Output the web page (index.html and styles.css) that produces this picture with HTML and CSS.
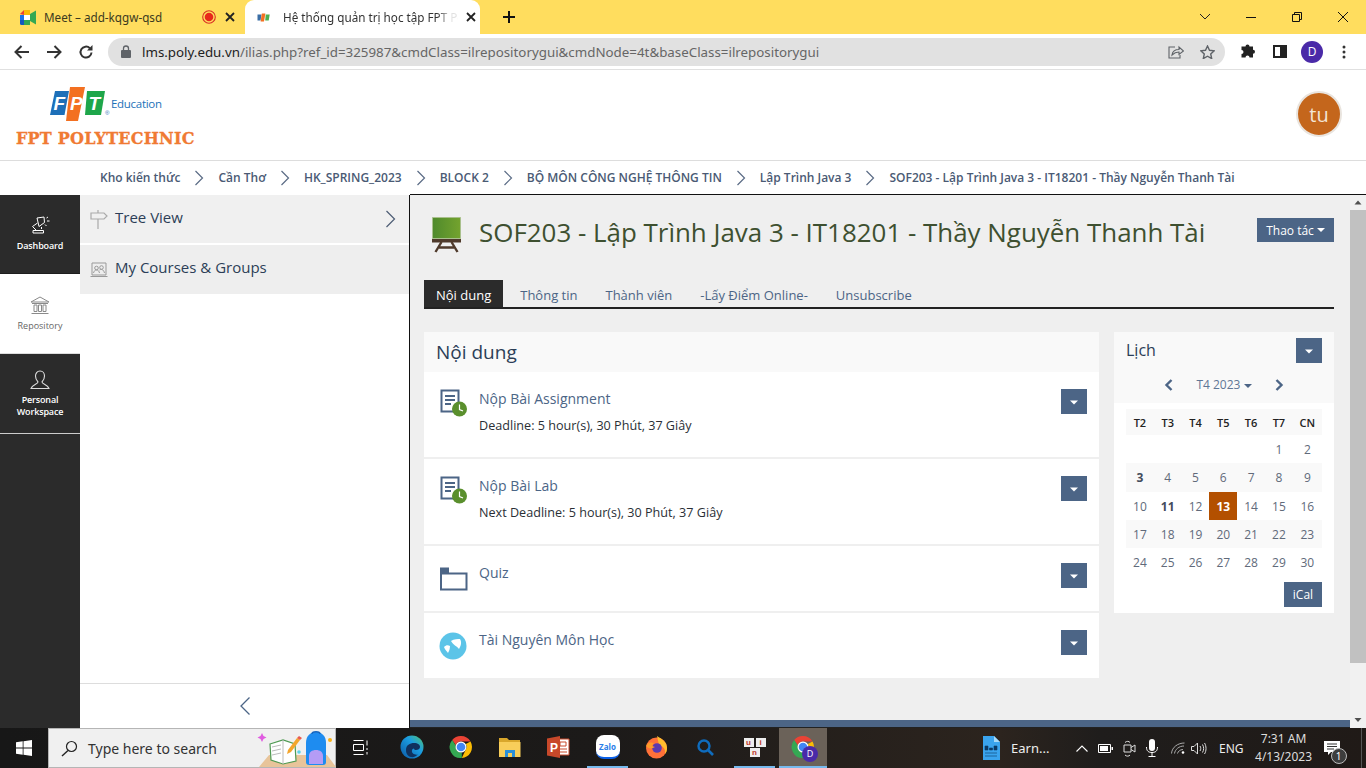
FILE: index.html
```html
<!DOCTYPE html>
<html lang="vi">
<head>
<meta charset="utf-8">
<title>Hệ thống quản trị học tập FPT Polytechnic</title>
<link rel="stylesheet" href="styles.css">
</head>
<body>
<svg class="defs" width="0" height="0" aria-hidden="true">
  <symbol id="chrome" viewBox="0 0 24 24">
    <path d="M12 1a11 11 0 0 1 9.500 5.500H12a5.500 5.500 0 0 0-5.200 3.700L3.200 5A11 11 0 0 1 12 1z" fill="#ea4335"/>
    <path d="M21.500 6.500A11 11 0 0 1 12.800 23l3.900-8.200A5.500 5.500 0 0 0 16.800 9L21.500 6.500z" fill="#fbbc04"/>
    <path d="M12.800 23A11 11 0 0 1 3.200 5l3.700 5.800a5.500 5.500 0 0 0 5.900 6.700z" fill="#34a853"/>
    <circle cx="12" cy="12" r="5.500" fill="#fff"/><circle cx="12" cy="12" r="4.300" fill="#4285f4"/>
  </symbol>
  <symbol id="caret" viewBox="0 0 26 26"><path d="M9 11.500h8l-4 4z" fill="#fff"/></symbol>
  <symbol id="crumb" viewBox="0 0 12 16"><path d="M2.500 1l7 7-7 7" fill="none" stroke="#5a6b85" stroke-width="1.200"/></symbol>
  <symbol id="doc" viewBox="0 0 28 28">
    <path d="M1.500 1.500h17v21h-17z" fill="#fff" stroke="#4c6586" stroke-width="2"/>
    <path d="M5 7h10M5 11h10M5 15h6" stroke="#4c6586" stroke-width="1.800"/>
    <circle cx="19.500" cy="20" r="7.500" fill="#5a8f2d"/>
    <path d="M19.500 15.500v5l3.500 1.500" fill="none" stroke="#fff" stroke-width="1.200"/>
  </symbol>
</svg>

<header class="tabstrip">
  <div class="tab">
    <svg class="fav" width="17" height="15" viewBox="0 0 17 15"><path d="M4 0h6v5H4z" fill="#fbbc04"/><path d="M0 4l4-4v5z" fill="#ea4335"/><path d="M0 5h4v5H0z" fill="#1a73e8"/><path d="M0 10h4v5H1.500A1.500 1.500 0 0 1 0 13.500z" fill="#1558c0"/><path d="M4 10h6v5H4z" fill="#34a853"/><path d="M10 4l6-3.500v14L10 11z" fill="#34a853"/><path d="M4 5h6v5H4z" fill="#fff"/></svg>
    <span class="tab-title">Meet – add-kqgw-qsd</span>
    <svg class="rec" width="14" height="14" viewBox="0 0 14 14"><circle cx="7" cy="7" r="6.300" fill="none" stroke="#d93025" stroke-width="1.100"/><circle cx="7" cy="7" r="4.300" fill="#e8281b"/></svg>
    <svg class="tab-x" width="10" height="10" viewBox="0 0 10 10"><path d="M1 1l8 8M9 1l-8 8" stroke="#222" stroke-width="1.800"/></svg>
  </div>
  <div class="tab tab-active">
    <svg class="fav-fpt" width="13" height="9" viewBox="0 0 13 9"><path d="M.5 1.500h4l-1 6h-3z" fill="#3a6ea5"/><path d="M4.800.5h3.600l-1.400 8H3.600z" fill="#f37021"/><path d="M8.700 1.500h4l-1 6h-3.500z" fill="#4caf50"/></svg>
    <span class="tab-title tab-fade">Hệ thống quản trị học tập FPT Po</span>
    <svg class="tab-x" width="10" height="10" viewBox="0 0 10 10"><path d="M1 1l8 8M9 1l-8 8" stroke="#222" stroke-width="1.800"/></svg>
  </div>
  <svg class="newtab" width="12" height="12" viewBox="0 0 12 12"><path d="M6 0v12M0 6h12" stroke="#111" stroke-width="2"/></svg>
  <div class="winctl">
    <svg width="46" height="12" viewBox="0 0 46 12"><path d="M18 3l5 5 5-5" fill="none" stroke="#222"/></svg>
    <svg width="46" height="12" viewBox="0 0 46 12"><path d="M18 6.500h10" stroke="#111"/></svg>
    <svg width="46" height="12" viewBox="0 0 46 12"><path d="M18.500 3.500h7v7h-7zM20.500 3.500v-2h7v7h-2" fill="none" stroke="#111"/></svg>
    <svg width="46" height="12" viewBox="0 0 46 12"><path d="M18 1l10 10M28 1L18 11" stroke="#111"/></svg>
  </div>
</header>

<nav class="toolbar">
  <svg class="tb-btn" width="16" height="14" viewBox="0 0 16 14"><path d="M15 7H2M7.500 1L1.500 7l6 6" fill="none" stroke="#333" stroke-width="2"/></svg>
  <svg class="tb-btn" width="16" height="14" viewBox="0 0 16 14"><path d="M1 7h13M8.500 1l6 6-6 6" fill="none" stroke="#333" stroke-width="2"/></svg>
  <svg class="tb-btn" width="16" height="16" viewBox="0 0 16 16"><path d="M13.500 8.500a5.500 5.500 0 1 1-1.600-4.300" fill="none" stroke="#333" stroke-width="2"/><path d="M14.500 1v5.500H9z" fill="#333"/></svg>
  <div class="omnibox">
    <svg width="10" height="13" viewBox="0 0 10 13"><path d="M2.500 5V3.500a2.500 2.500 0 0 1 5 0V5" fill="none" stroke="#5f6368" stroke-width="1.300"/><rect y="5" width="10" height="8" rx="1" fill="#5f6368"/></svg>
    <span class="url"><b class="host">lms.poly.edu.vn</b>/ilias.php?ref_id=325987&amp;cmdClass=ilrepositorygui&amp;cmdNode=4t&amp;baseClass=ilrepositorygui</span>
    <svg class="omni-share" width="16" height="15" viewBox="0 0 16 15"><path d="M7 3H1v11h11v-3" fill="none" stroke="#5f6368" stroke-width="1.100"/><path d="M4 11c.5-3.500 3-5.500 7-5.500V3l4.500 4L11 10.500V8C8 8 6 9 4 11z" fill="none" stroke="#5f6368" stroke-width="1.100"/></svg>
    <svg class="omni-star" width="15" height="14" viewBox="0 0 15 14"><path d="M7.500 1l2 4.300 4.700.5-3.500 3.200 1 4.600-4.200-2.400-4.200 2.400 1-4.600L.8 5.800l4.700-.5z" fill="none" stroke="#5f6368" stroke-width="1.400"/></svg>
  </div>
  <svg class="tb-ext" width="15" height="15" viewBox="0 0 15 15"><path d="M5.500 2.500a2 2 0 0 1 4 0H13v3.300a2 2 0 0 1 0 4V13.500H9.500a2 2 0 0 0-4 0H1.500V10a2 2 0 0 0 0-4V2.500z" fill="#222"/></svg>
  <svg class="tb-panel" width="14" height="13" viewBox="0 0 14 13"><path d="M0 0h14v13H0z" fill="#222"/><path d="M2 2h5v9H2z" fill="#fff"/></svg>
  <span class="tb-avatar">D</span>
  <svg class="tb-menu" width="4" height="14" viewBox="0 0 4 14"><circle cx="2" cy="2" r="1.500" fill="#333"/><circle cx="2" cy="7" r="1.500" fill="#333"/><circle cx="2" cy="12" r="1.500" fill="#333"/></svg>
</nav>

<section class="site-head">
  <div class="brand">
    <div class="brand-top">
      <svg class="fpt-logo" width="62" height="36" viewBox="0 0 62 36">
        <path d="M5 5h14l-4.500 24H0z" fill="#1d6fb8"/>
        <path d="M20 1h15L28 35H16z" fill="#f37021"/>
        <path d="M37 5h18l-4 24H35z" fill="#1ea64a"/>
        <text x="3.500" y="24" class="fpt-l">F</text>
        <text x="20" y="24" class="fpt-l">P</text>
        <text x="38.500" y="24" class="fpt-l">T</text>
        <text x="55" y="29" class="fpt-r">®</text>
      </svg>
      <span class="edu">Education</span>
    </div>
    <div class="poly">FPT POLYTECHNIC</div>
  </div>
  <span class="user-avatar">tu</span>
</section>

<nav class="crumbs">
  <a>Kho kiến thức</a><svg width="12" height="16"><use href="#crumb"/></svg>
  <a>Cần Thơ</a><svg width="12" height="16"><use href="#crumb"/></svg>
  <a>HK_SPRING_2023</a><svg width="12" height="16"><use href="#crumb"/></svg>
  <a>BLOCK 2</a><svg width="12" height="16"><use href="#crumb"/></svg>
  <a>BỘ MÔN CÔNG NGHỆ THÔNG TIN</a><svg width="12" height="16"><use href="#crumb"/></svg>
  <a>Lập Trình Java 3</a><svg width="12" height="16"><use href="#crumb"/></svg>
  <a>SOF203 - Lập Trình Java 3 - IT18201 - Thầy Nguyễn Thanh Tài</a>
</nav>

<div class="workspace">
  <aside class="mainbar">
    <div class="mb-item">
      <svg width="20" height="20" viewBox="0 0 20 20" fill="none" stroke="#fff" stroke-width="1"><path d="M7 3l7-1 .5 5.500-5.500 4zM7.500 8L2.500 11.500 6 15M3 15.500h10.500V18H3zM16.500 3l1.500-1M17 6h2.500M15 9.500l1.500 1.500M11.500 12v2"/></svg>
      <span>Dashboard</span>
    </div>
    <div class="mb-item mb-active">
      <svg width="20" height="19" viewBox="0 0 20 19" fill="none" stroke="#8a8a8a" stroke-width="1"><path d="M1 6l9-5 9 5zM2 7.500h16M4 9h3v6.500H4zM8.500 9h3v6.500h-3zM13 9h3v6.500h-3zM1.500 17.500h17"/></svg>
      <span>Repository</span>
    </div>
    <div class="mb-item mb-two">
      <svg width="20" height="20" viewBox="0 0 20 20" fill="none" stroke="#ddd" stroke-width="1.100"><path d="M10 1c3 0 4.500 2.500 4.500 5s-1.500 5-2.500 6c0 2 6 2.500 7 6.500H1C2 14.500 8 14 8 12 7 11 5.500 8.500 5.500 6S7 1 10 1z"/></svg>
      <span>Personal<br>Workspace</span>
    </div>
  </aside>

  <aside class="slate">
    <div class="slate-row">
      <svg width="18" height="19" viewBox="0 0 18 19" fill="none" stroke="#aaa" stroke-width="1.200"><path d="M1 3h13l3 3-3 3H1zM8 0v3M8 9v10"/></svg>
      <span class="slate-txt">Tree View</span>
      <svg class="slate-arrow" width="12" height="20" viewBox="0 0 12 20"><path d="M1.500 2l8 8-8 8" fill="none" stroke="#4c5c74" stroke-width="1.200"/></svg>
    </div>
    <div class="slate-row slate-row2">
      <svg width="18" height="16" viewBox="0 0 18 16" fill="none" stroke="#999"><path d="M2 1h14v12H2zM.5 14.500h17"/><circle cx="6.500" cy="6" r="1.800"/><circle cx="11.500" cy="5.500" r="1.800"/><path d="M3.500 11c.5-2 1.500-3 3-3s2.500 1 3 3M9.500 8c1.500-1 4-1 5 3"/></svg>
      <span class="slate-txt">My Courses &amp; Groups</span>
    </div>
    <div class="slate-foot">
      <svg width="12" height="20" viewBox="0 0 12 20"><path d="M10.500 1.500L2 10l8.500 8.500" fill="none" stroke="#4c6586" stroke-width="1.300"/></svg>
    </div>
  </aside>

  <main class="content">
    <div class="content-body">
      <div class="title-bar">
        <svg class="board" width="30" height="36" viewBox="0 0 30 36">
          <defs><linearGradient id="board" x1="0" x2="1"><stop offset="0" stop-color="#4f8a2c"/><stop offset="1" stop-color="#74a32e"/></linearGradient></defs>
          <path d="M.5.500h28v21H.5z" fill="url(#board)" stroke="#a9c08c"/>
          <path d="M0 22h29v3.500H0z" fill="#4f3a2b"/>
          <path d="M9.500 25L3.500 35M19.500 25l6 10M7 30.500h15" stroke="#4f3a2b" stroke-width="2.400" fill="none"/>
        </svg>
        <h1>SOF203 - Lập Trình Java 3 - IT18201 - Thầy Nguyễn Thanh Tài</h1>
        <button class="btn btn-action">Thao tác <i class="down"></i></button>
      </div>

      <ul class="tabs">
        <li class="active">Nội dung</li>
        <li>Thông tin</li>
        <li>Thành viên</li>
        <li>-Lấy Điểm Online-</li>
        <li>Unsubscribe</li>
      </ul>

      <div class="columns">
        <section class="panel">
          <h2>Nội dung</h2>
          <div class="rows">
            <article class="row row-tall">
              <svg class="row-ico" width="28" height="28"><use href="#doc"/></svg>
              <div class="row-txt"><a>Nộp Bài Assignment</a><p>Deadline: 5 hour(s), 30 Phút, 37 Giây</p></div>
              <button class="btn btn-drop"><svg width="26" height="26"><use href="#caret"/></svg></button>
            </article>
            <article class="row row-tall">
              <svg class="row-ico" width="28" height="28"><use href="#doc"/></svg>
              <div class="row-txt"><a>Nộp Bài Lab</a><p>Next Deadline: 5 hour(s), 30 Phút, 37 Giây</p></div>
              <button class="btn btn-drop"><svg width="26" height="26"><use href="#caret"/></svg></button>
            </article>
            <article class="row">
              <svg class="row-ico ico-folder" width="28" height="24" viewBox="0 0 28 24"><path d="M1 6.500h25.500v16H1zM1 1.500h7v5H1z" fill="none" stroke="#4c6586" stroke-width="2"/><path d="M1 1h7v5H1z" fill="#4c6586"/></svg>
              <div class="row-txt"><a>Quiz</a></div>
              <button class="btn btn-drop"><svg width="26" height="26"><use href="#caret"/></svg></button>
            </article>
            <article class="row">
              <svg class="row-ico ico-res" width="28" height="28" viewBox="0 0 28 28"><circle cx="14" cy="14" r="13.500" fill="#5cc4e8"/><path d="M5 15c2-2 4-2 6-1 0 3-1 5-2 7-1-2-3-3-4-6zM12 9c3-2 7-2 9-2 2 3 1 7-1 10-2-3-6-4-8-8z" fill="#fff"/></svg>
              <div class="row-txt"><a>Tài Nguyên Môn Học</a></div>
              <button class="btn btn-drop"><svg width="26" height="26"><use href="#caret"/></svg></button>
            </article>
          </div>
        </section>

        <section class="cal">
          <div class="cal-head">
            <div class="cal-top"><h3>Lịch</h3><button class="btn btn-drop"><svg width="26" height="26"><use href="#caret"/></svg></button></div>
            <div class="cal-nav">
              <svg width="9" height="12" viewBox="0 0 9 12"><path d="M7.500 1l-5 5 5 5" fill="none" stroke="#4c6586" stroke-width="2.400"/></svg>
              <span>T4 2023 <i class="down down-grey"></i></span>
              <svg width="9" height="12" viewBox="0 0 9 12"><path d="M1.500 1l5 5-5 5" fill="none" stroke="#4c6586" stroke-width="2.400"/></svg>
            </div>
          </div>
          <div class="cal-grid">
            <b class="dow">T2</b><b class="dow">T3</b><b class="dow">T4</b><b class="dow">T5</b><b class="dow">T6</b><b class="dow">T7</b><b class="dow">CN</b>
            <span></span><span></span><span></span><span></span><span></span><span>1</span><span>2</span>
            <span class="alt strong">3</span><span class="alt">4</span><span class="alt">5</span><span class="alt">6</span><span class="alt">7</span><span class="alt">8</span><span class="alt">9</span>
            <span>10</span><span class="strong">11</span><span>12</span><span class="today">13</span><span>14</span><span>15</span><span>16</span>
            <span class="alt">17</span><span class="alt">18</span><span class="alt">19</span><span class="alt">20</span><span class="alt">21</span><span class="alt">22</span><span class="alt">23</span>
            <span>24</span><span>25</span><span>26</span><span>27</span><span>28</span><span>29</span><span>30</span>
          </div>
          <div class="cal-foot"><button class="btn btn-ical">iCal</button></div>
        </section>
      </div>
      <div class="page-foot"></div>
    </div>
    <div class="scrollbar">
      <svg width="16" height="15" viewBox="0 0 16 15"><path d="M4.500 9.500L8 5.500l3.500 4z" fill="#505050"/></svg>
      <div class="scroll-track"><div class="scroll-thumb"></div></div>
      <svg width="16" height="16" viewBox="0 0 16 16"><path d="M4.500 6L8 10l3.500-4z" fill="#505050"/></svg>
    </div>
  </main>
</div>

<footer class="taskbar">
  <div class="start"><svg width="16" height="16" viewBox="0 0 16 16"><path d="M0 2.300l6.700-1v6.300H0zM7.500 1.200L16 0v7.600H7.500zM0 8.400h6.700v6.300l-6.700-1zM7.500 8.400H16V16l-8.500-1.200z" fill="#fff"/></svg></div>
  <div class="search">
    <svg width="17" height="17" viewBox="0 0 17 17"><circle cx="10.500" cy="6.500" r="5" fill="none" stroke="#222" stroke-width="1.200"/><path d="M7 10.500L1 16" stroke="#222" stroke-width="1.400"/></svg>
    <span>Type here to search</span>
    <svg class="search-art" width="80" height="38" viewBox="0 0 80 38">
      <path d="M2 37l10-12h58l9 12z" fill="#e8c49a"/>
      <path d="M5 3l1.500 3 3 1.500-3 1.500-1.500 3-1.500-3-3-1.500 3-1.500z" fill="#e05ce0"/>
      <path d="M13 14l13-4 12 4 1 17-13 3-12-4z" fill="#fff" stroke="#4f9a52" stroke-width="1.200"/>
      <path d="M26 10v24M15 17l9-2M15 21l9-2M15 25l9-2" stroke="#bbb"/>
      <path d="M31 20l9-12 3 2-9 12-4 2z" fill="#f4a52c"/><path d="M40 8l2-2 3 2-2 2z" fill="#e85a4f"/>
      <circle cx="42" cy="22" r="1.800" fill="#5cd3e8"/>
      <path d="M49 13c0-7 4-11 10-11s10 4 10 11v19c0 2-1 3-3 3H52c-2 0-3-1-3-3z" fill="#1e8cf0"/>
      <path d="M52 26c0-4 3-6 7-6s7 2 7 6v8H52z" fill="#b49cf5"/>
      <path d="M55 4c0-3 8-3 8 0" stroke="#1666c0" fill="none" stroke-width="1.500"/>
      <circle cx="73" cy="10" r="2" fill="#f9b115"/>
    </svg>
  </div>
  <div class="apps">
    <div class="app"><svg class="taskview" width="16" height="15" viewBox="0 0 16 15" fill="none" stroke="#fff"><path d="M.5.500h10M.5 14.500h10M.5 4.500h10v6H.5zM14 .5v5M14 8v2M14 12v2.500"/></svg></div>
    <div class="app"><svg width="24" height="24" viewBox="0 0 24 24"><defs><linearGradient id="edge" x1="0" y1="1" x2="1" y2="0"><stop offset="0" stop-color="#0c59a4"/><stop offset=".6" stop-color="#1b9de2"/><stop offset="1" stop-color="#54c46e"/></linearGradient></defs><circle cx="12" cy="12" r="11.500" fill="url(#edge)"/><path d="M6 15c0-5 4-7 8-7 4 0 6 2 6 4 0 2-2 3-4 3-1 0-2-.5-2-1.500-2 0-3 3-1 5 1 1 3 1.500 5 1-2 2-5 3-7 2.500-3-.5-5-3-5-7z" fill="#10315e"/></svg></div>
    <div class="app"><svg width="24" height="24"><use href="#chrome"/></svg></div>
    <div class="app"><svg width="22" height="20" viewBox="0 0 22 20"><path d="M0 1h8l2 2h11v4H0z" fill="#d9a72b"/><path d="M0 5h21.500v15H0z" fill="#f8ce5a"/><path d="M6 13h10v7h-3v-4H9v4H6z" fill="#2a8fd8"/></svg></div>
    <div class="app"><svg width="23" height="22" viewBox="0 0 23 22"><path d="M8 3h14v16H8z" fill="#fff" stroke="#c8482a"/><path d="M13 6h6v4h-6zM11 13h9M11 16h9" stroke="#c8482a" fill="none"/><path d="M0 2.500L13 0v22L0 19.500z" fill="#c8482a"/><text x="3" y="15.500" class="ppt-l">P</text></svg></div>
    <div class="app app-open"><span class="zalo">Zalo</span></div>
    <div class="app"><svg width="23" height="24" viewBox="0 0 23 24"><circle cx="11.500" cy="13" r="10.500" fill="#ff7139"/><path d="M12 1c5 3 10 6 10 12 0 3-1 5-2 6 1-6-3-8-6-9z" fill="#ffbd2e"/><circle cx="12" cy="13" r="4.800" fill="#5b3ab0"/><path d="M1 11c2-4 5-4 8-3l-2 3 3 1c-3 2-7 2-9-1z" fill="#ff9b29"/></svg></div>
    <div class="app"><svg width="17" height="17" viewBox="0 0 17 17"><circle cx="7" cy="7" r="5.500" fill="none" stroke="#0f6cbd" stroke-width="2.400"/><path d="M11 11l5 5" stroke="#0f6cbd" stroke-width="2.600"/></svg></div>
    <div class="app app-open"><span class="keys"><i>u</i><i>i</i><i>n</i></span></div>
    <div class="app app-open app-current"><span class="chrome-wrap"><svg width="24" height="24"><use href="#chrome"/></svg><span class="chrome-badge">D</span></span></div>
  </div>
  <div class="tray">
    <div class="earn"><svg width="18" height="24" viewBox="0 0 18 24"><path d="M1 0h11l6 6v18H1z" fill="#3aa4ee"/><path d="M12 0l6 6h-6z" fill="#a6d9f8"/><path d="M3 10h3v4H3zM7.500 12h3v2h-3zM12 10h3v4h-3zM3 17h12M3 20h12" stroke="#0a3a66" fill="#0a3a66" stroke-width=".6"/></svg><span>Earn...</span></div>
    <svg class="t-chev" width="12" height="7" viewBox="0 0 12 7"><path d="M.5 6.500l5.500-5.500 5.500 5.500" fill="none" stroke="#fff" stroke-width="1.100"/></svg>
    <svg class="t-batt" width="15" height="9" viewBox="0 0 15 9"><path d="M.5.500h12v8H.5z" fill="none" stroke="#fff"/><path d="M2 2h8v5H2zM13.500 3H15v3h-1.500z" fill="#fff"/></svg>
    <svg class="t-cam" width="13" height="17" viewBox="0 0 13 17" fill="none" stroke="#ddd"><path d="M1 5h7v7H1zM8 7.500L12 5v7L8 9.500M2 2.500c1.500-1.500 4-1.500 5 0M2 15c1.500 1.500 4 1.500 5 0"/></svg>
    <svg class="t-mic" width="12" height="18" viewBox="0 0 12 18"><rect x="3" width="6" height="12" rx="3" fill="#fff"/><path d="M.5 8c0 4 2 5.500 5.500 5.500S11.500 12 11.500 8M6 13.500V17M2.500 17.500h7" fill="none" stroke="#fff"/></svg>
    <svg class="t-wifi" width="14" height="12" viewBox="0 0 14 12" fill="none" stroke="#aaa"><path d="M.5 11.500C1 5 7 1 13.500 1M3.500 11.500C4 7.500 8 4 13 4M6.500 11.500C7 9.500 9 7.500 12 7.500"/><circle cx="12" cy="10.500" r="1.300" fill="#fff" stroke="none"/></svg>
    <svg class="t-vol" width="16" height="13" viewBox="0 0 16 13" fill="none" stroke="#ddd"><path d="M.5 4.500H3L6.500 1v11L3 8.500H.5zM9 4c1 1.500 1 3.500 0 5M11.500 2.500c1.500 2.500 1.500 5.500 0 8M13.500 1c2 3 2 8 0 11"/></svg>
    <span class="t-lang">ENG</span>
    <span class="t-clock">7:31 AM<br>4/13/2023</span>
    <span class="t-note">
      <svg width="16" height="14" viewBox="0 0 16 14"><path d="M0 0h16v11H7l-3 3v-3H0z" fill="#fff"/><path d="M3 3h10M3 5.500h10M3 8h7" stroke="#333"/></svg>
      <span class="t-badge">1</span>
    </span>
    <span class="show-desk"></span>
  </div>
</footer>
</body>
</html>
```

FILE: styles.css
```css
* { box-sizing: border-box; }
html, body { margin: 0; padding: 0; }
body {
  width: 1366px;
  height: 768px;
  overflow: hidden;
  display: flex;
  flex-direction: column;
  font-family: "Open Sans", "Noto Sans", sans-serif;
  background: #fff;
  color: #222;
}
.defs { display: block; height: 0; }
svg { flex: none; display: block; }
h1, h2, h3, p, ul { margin: 0; padding: 0; font-weight: 400; }
button { font-family: inherit; border: 0; padding: 0; }
i { font-style: normal; }

/* browser chrome */
.tabstrip {
  height: 34px;
  flex: none;
  display: flex;
  align-items: center;
  background: #ffdd5e;
  font-family: "Noto Sans", "Open Sans", sans-serif;
}
.tab {
  width: 245px;
  height: 34px;
  display: flex;
  align-items: center;
  padding-left: 20px;
  font-size: 11.700px;
  color: #3c3a20;
}
.tab .tab-title { width: 150px; margin-left: 7px; white-space: nowrap; }
.rec { margin-left: 8px; }
.tab .tab-x { margin-left: 9px; }
.tab-active {
  width: 235px;
  background: #fff;
  border-radius: 9px 9px 0 0;
  padding-left: 12px;
  color: #333;
}
.tab-active .tab-title { width: 175px; margin-left: 13px; }
.tab-active .tab-x { margin-left: 8px; }
.tab-fade { mask-image: linear-gradient(90deg, #000 88%, rgba(0, 0, 0, .15) 96%); }
.newtab { margin-left: 23px; }
.winctl { margin-left: auto; display: flex; }

.toolbar {
  height: 36px;
  flex: none;
  display: flex;
  align-items: center;
  background: #fff;
  border-bottom: 1px solid #e0e0e0;
  padding-left: 14px;
}
.tb-btn { margin-right: 16px; }
.omnibox {
  width: 1117px;
  height: 28px;
  margin-left: -2px;
  display: flex;
  align-items: center;
  background: #e1e1e1;
  border-radius: 14px;
  padding-left: 13px;
  font-family: "Noto Sans", sans-serif;
  font-size: 13.340px;
  color: #666;
}
.url { margin-left: 11px; white-space: nowrap; flex: 1; }
.host { font-weight: 400; color: #222; }
.omni-star { margin: 0 10px 0 16px; }
.tb-ext { margin-left: 15px; }
.tb-panel { margin-left: 18px; }
.tb-avatar {
  width: 22px; height: 22px; margin-left: 14px;
  display: flex; align-items: center; justify-content: center;
  border-radius: 50%;
  background: #4a2aa8; color: #fff; font-size: 12px;
}
.tb-menu { margin-left: 19px; }

/* site header */
.site-head {
  height: 91px;
  flex: none;
  display: flex;
  justify-content: space-between;
  align-items: flex-start;
  padding: 15px 24px 0 16px;
  border-bottom: 1px solid #ddd;
}
.brand-top { display: flex; align-items: center; margin-left: 34px; height: 38px; }
.fpt-l { font: italic 700 19px "Liberation Sans", sans-serif; fill: #fff; }
.fpt-r { font: 400 6px "Liberation Sans", sans-serif; fill: #1d6fb8; }
.edu { font-size: 11.500px; letter-spacing: -.3px; color: #1d72b8; margin: -1px 0 0 -1px; }
.poly {
  margin-top: 6px;
  font-family: "DejaVu Serif", serif;
  font-weight: 700;
  font-size: 16px;
  letter-spacing: .22px;
  -webkit-text-stroke: .3px #f07a33;
  color: #f07a33;
  line-height: 20px;
  white-space: nowrap;
}
.user-avatar {
  width: 46px; height: 46px;
  margin-top: 6px;
  display: flex; align-items: center; justify-content: center;
  border-radius: 50%;
  background: #c4661c;
  border: 2px solid #e9e4de;
  color: #f3e5d5;
  font-size: 20px;
}

.crumbs {
  height: 34px;
  flex: none;
  display: flex;
  align-items: center;
  padding: 0 0 1px 100px;
  font-size: 12px;
  font-weight: 600;
  color: #4a5a74;
  white-space: nowrap;
}
.crumbs svg { margin: 0 13px; }

/* workspace */
.workspace { flex: 1; min-height: 0; display: flex; }
.mainbar {
  width: 80px;
  flex: none;
  background: #2b2b2b;
  display: flex;
  flex-direction: column;
}
.mb-item {
  height: 79px;
  display: flex;
  flex-direction: column;
  align-items: center;
  padding-top: 20px;
  gap: 5px;
  font-size: 9px;
  font-weight: 600;
  letter-spacing: -.15px;
  color: #fff;
  text-align: center;
  line-height: 12px;
  border-bottom: 1px solid #1d1d1d;
}
.mb-active { background: #fff; color: #666; font-weight: 400; height: 80px; padding-top: 22px; border-bottom: 1px solid #ddd; letter-spacing: 0; }
.mb-two { padding-top: 16px; height: 80px; border-bottom: 1px solid #ccc; gap: 4px; }

.slate {
  width: 330px;
  flex: none;
  display: flex;
  flex-direction: column;
  background: #fff;
  border-right: 1px solid #111;
}
.slate-row {
  height: 48px;
  flex: none;
  display: flex;
  align-items: center;
  padding: 0 12px 0 10px;
  background: #f0f0f0;
  margin-bottom: 2px;
}
.slate-row2 { height: 49px; background: #eee; margin-bottom: 0; }
.slate-txt { margin-left: 7px; padding-bottom: 5px; font-size: 15px; color: #2c3e57; flex: 1; }
.slate-foot {
  margin-top: auto;
  height: 45px;
  flex: none;
  display: flex;
  align-items: center;
  justify-content: center;
  border-top: 1px solid #ddd;
}

.content {
  flex: 1;
  min-width: 0;
  display: flex;
  background: #efefef;
  border-top: 1px solid #111;
  margin-top: -1px;
}
.content-body { flex: 1; display: flex; flex-direction: column; padding: 0 16px 0 14px; min-width: 0; }
.title-bar { height: 85px; flex: none; display: flex; align-items: center; padding: 0 0 0 8px; }
.board { margin-top: -5px; }
.title-bar h1 { flex: 1; margin-left: 17px; font-size: 25.930px; color: #3e5030; white-space: nowrap; line-height: 1; padding-bottom: 9px; }
.btn {
  display: flex;
  align-items: center;
  justify-content: center;
  background: #4c6586;
  color: #fff;
  font-size: 12px;
}
.btn-action { width: 77px; height: 24px; gap: 3px; margin-top: -15px; }
.down { display: inline-block; width: 0; height: 0; border: 4px solid transparent; border-top-color: #fff; border-bottom-width: 0; vertical-align: middle; }
.down-grey { border-top-color: #4c6586; }
.tabs {
  height: 29px;
  flex: none;
  display: flex;
  list-style: none;
  border-bottom: 2px solid #222;
  font-size: 13px;
  color: #4c6586;
}
.tabs li { padding: 0 14px; line-height: 30px; white-space: nowrap; }
.tabs li.active { background: #2b2b2b; color: #fff; padding: 0 12px; margin-right: 3px; }
.columns { flex: none; display: flex; gap: 15px; align-items: flex-start; margin-top: 23px; }
.panel { width: 675px; background: #fff; }
.panel h2 { height: 40px; background: #f9f9f9; padding-left: 12px; font-size: 19px; line-height: 41px; color: #2c3e57; }
.rows { display: flex; flex-direction: column; gap: 2px; background: #efefef; }
.row { height: 65px; display: flex; align-items: flex-start; background: #fff; padding: 17px 12px 0 16px; }
.row-tall { height: 85px; }
.row-ico { margin-right: 11px; }
.ico-folder { margin-top: 4px; }
.ico-res { margin-top: 2px; margin-left: -1px; margin-right: 12px; }
.row-txt { flex: 1; font-size: 14px; line-height: 20px; color: #4c6586; }
.row-txt p { margin-top: 7px; font-size: 12.620px; line-height: 20px; color: #2a2f36; }
.btn-drop { width: 26px; height: 25px; }

.cal { width: 220px; background: #fff; padding-bottom: 6px; }
.cal-head { height: 71px; background: #f9f9f9; padding: 6px 12px 0; }
.cal-top { display: flex; align-items: center; justify-content: space-between; }
.cal-top h3 { font-size: 16px; padding-bottom: 2px; color: #2c3e57; }
.cal-nav { display: flex; align-items: center; justify-content: space-between; padding: 0 38px; margin-top: 13px; font-size: 12px; color: #5f7696; }
.cal-nav span { white-space: nowrap; }
.cal-grid {
  display: grid;
  grid-template-columns: repeat(6, 27.800px) 29.200px;
  grid-template-rows: 26px 28px 29px 28px 28px 28px;
  margin: 6px 12px 0;
  font-size: 12px;
  color: #616a7a;
}
.cal-grid > * { display: flex; align-items: center; justify-content: center; }
.dow { background: #f9f9f9; font-weight: 600; color: #222; font-size: 11px; }
.alt { background: #f9f9f9; }
.strong { font-weight: 700; color: #444c5c; }
.today { background: #b35000; color: #fff; font-weight: 700; }
.cal-foot { display: flex; justify-content: flex-end; padding: 6px 12px 0; }
.btn-ical { width: 38px; height: 25px; }
.page-foot { margin: auto -16px 0 -14px; height: 8px; background: #4c6586; border-bottom: 1px solid #222; flex: none; }

.scrollbar { width: 16px; flex: none; background: #f1f1f1; display: flex; flex-direction: column; }
.scroll-track { flex: 1; }
.scroll-thumb { height: 453px; background: #c1c1c1; }

/* taskbar */
.taskbar {
  height: 40px;
  flex: none;
  display: flex;
  align-items: center;
  background: linear-gradient(90deg, #171717 0, #1c1a19 600px, #2c241e 1000px, #1f1d1c 1100px, #201a17);
  color: #fff;
}
.start { width: 48px; height: 40px; display: flex; align-items: center; justify-content: center; }
.search {
  width: 288px;
  height: 40px;
  display: flex;
  align-items: center;
  padding-left: 12px;
  background: #f0f0f0;
  border: 1px solid #b5b5b5;
  color: #333;
  font-family: "Noto Sans", sans-serif;
  font-size: 14px;
}
.search span { margin-left: 10px; flex: 1; white-space: nowrap; }
.search-art { margin-top: 1px; margin-right: -2px; }
.apps { display: flex; height: 40px; margin-left: 2px; }
.app {
  width: 49px;
  height: 40px;
  display: flex;
  align-items: center;
  justify-content: center;
  border-bottom: 2px solid transparent;
}
.taskview { margin-right: 4px; }
.app-open { position: relative; }
.app-open::after { content: ""; position: absolute; left: 4px; right: 4px; bottom: -2px; height: 2px; background: #76b9ed; }
.app-current { background: #6b6259; width: 48px; }
.app-current::after { left: 0; right: 0; }
.ppt-l { font: 700 12px "Liberation Sans", sans-serif; fill: #fff; }
.zalo {
  width: 24px; height: 24px;
  display: flex; align-items: center; justify-content: center;
  border-radius: 8px;
  background: #fff;
  border-bottom: 2px solid #0a60e8;
  color: #2a7de8;
  font-size: 8px;
  font-weight: 700;
}
.keys {
  width: 24px;
  display: flex;
  flex-wrap: wrap;
  justify-content: center;
  gap: 1px 2px;
  color: #c0392b;
  font-family: "Liberation Sans", sans-serif;
  font-size: 8px;
  font-weight: 700;
}
.keys i { width: 10px; height: 9px; line-height: 9px; background: #eee; text-align: center; }
.chrome-wrap { position: relative; display: block; width: 24px; height: 24px; margin-top: -1px; }
.chrome-badge {
  position: absolute; right: -3px; bottom: -3px;
  width: 16px; height: 16px;
  display: flex; align-items: center; justify-content: center;
  border-radius: 50%;
  background: #4a2aa8; color: #fff; font-size: 9px;
}
.tray { flex: 1; min-width: 0; height: 40px; display: flex; align-items: center; font-family: "Noto Sans", sans-serif; font-size: 12px; }
.earn { display: flex; align-items: center; margin-left: 155px; width: 85px; }
.earn span { margin-left: 11px; font-size: 13px; color: #eee; }
.t-chev { margin-left: 9px; }
.t-batt { margin-left: 10px; }
.t-cam { margin-left: 10px; }
.t-mic { margin-left: 10px; }
.t-wifi { margin-left: 13px; }
.t-vol { margin-left: 6px; }
.t-lang { margin-left: 12px; color: #eee; }
.t-clock { margin-left: 10px; width: 60px; text-align: center; font-size: 12px; line-height: 18px; color: #ddd; white-space: nowrap; }
.t-note { position: relative; margin-left: 10px; display: block; }
.t-badge {
  position: absolute; left: 7px; top: 7px;
  width: 16px; height: 16px;
  display: flex; align-items: center; justify-content: center;
  border-radius: 50%;
  background: #3d3d3d; border: 1px solid #bbb;
  font-size: 10px;
}
.show-desk { margin-left: auto; width: 5px; height: 40px; border-left: 1px solid #555; }
```
